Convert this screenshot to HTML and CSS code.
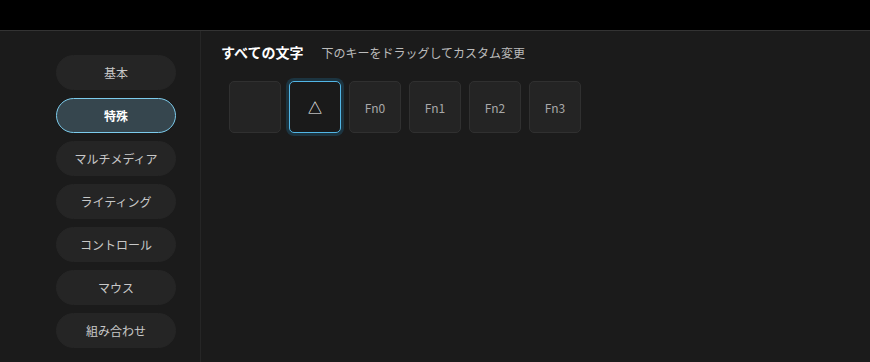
FILE: index.html
```html
<!DOCTYPE html>
<html lang="ja">
<head>
    <meta charset="UTF-8">
    <title>キー設定</title>
    <link rel="stylesheet" href="styles.css">
</head>
<body>
    <div class="topbar"></div>
    <div class="main">
        <div class="sidebar">
            <button class="cat-btn">基本</button>
            <button class="cat-btn active">特殊</button>
            <button class="cat-btn">マルチメディア</button>
            <button class="cat-btn">ライティング</button>
            <button class="cat-btn">コントロール</button>
            <button class="cat-btn">マウス</button>
            <button class="cat-btn">組み合わせ</button>
        </div>
        <div class="content">
            <div class="content-header">
                <h2>すべての文字</h2>
                <span class="hint">下のキーをドラッグしてカスタム変更</span>
            </div>
            <div class="key-list">
                <div class="key"></div>
                <div class="key selected">△</div>
                <div class="key">Fn0</div>
                <div class="key">Fn1</div>
                <div class="key">Fn2</div>
                <div class="key">Fn3</div>
            </div>
        </div>
    </div>
</body>
</html>
```

FILE: styles.css
```css
body {
    margin: 0;
    background: #1b1b1b;
    font-family: "Noto Sans CJK JP", "Noto Sans", sans-serif;
    color: #cccccc;
    height: 362px;
    overflow: hidden;
}
.topbar {
    height: 30px;
    background: #000;
    border-bottom: 1px solid #333;
}
.main {
    display: flex;
    height: 331px;
}
.sidebar {
    width: 201px;
    border-right: 1px solid #262626;
    padding: 24px 0 0 56px;
    box-sizing: border-box;
    display: flex;
    flex-direction: column;
    gap: 8px;
}
.cat-btn {
    width: 120px;
    height: 35px;
    border: 1px solid #252525;
    border-radius: 18px;
    background: #252525;
    color: #c8c8c8;
    font-family: inherit;
    font-size: 12px;
    padding: 0;
    cursor: pointer;
}
.cat-btn.active {
    background: #36464e;
    border-color: #7ccbec;
    color: #fff;
    font-weight: bold;
}
.content {
    flex: 1;
    padding: 11px 0 0 20px;
}
.content-header {
    display: flex;
    align-items: baseline;
    gap: 18px;
}
.content-header h2 {
    margin: 0;
    font-size: 14px;
    font-weight: bold;
    color: #fff;
}
.hint {
    font-size: 12px;
    color: #bcbcbc;
}
.key-list {
    display: flex;
    gap: 8px;
    margin: 19px 0 0 8px;
}
.key {
    width: 52px;
    height: 52px;
    box-sizing: border-box;
    background: #242424;
    border: 1px solid #303030;
    border-radius: 5px;
    display: flex;
    align-items: center;
    justify-content: center;
    font-size: 12px;
    color: #a8a8a8;
}
.key.selected {
    background: #1a1a1a;
    border: 1px solid #52b6e6;
    box-shadow: 0 0 0 3px #1c3440;
    color: #fff;
    font-size: 14px;
}
```
